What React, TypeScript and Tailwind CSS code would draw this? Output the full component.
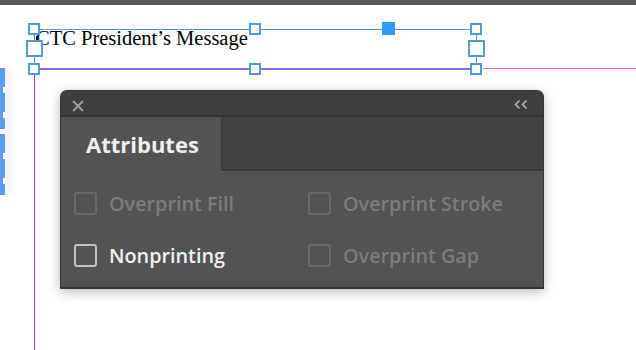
import React from "react";

// Text frame handles, placed on the layout canvas
const handles = [
  { l: 28, t: 23, s: 12 },
  { l: 249, t: 23, s: 12 },
  { l: 470, t: 23, s: 12 },
  { l: 26, t: 40, s: 17 },
  { l: 468, t: 40, s: 17 },
  { l: 28, t: 63, s: 12 },
  { l: 249, t: 63, s: 12 },
  { l: 470, t: 63, s: 12 },
];

function Checkbox({ label, enabled }: { label: string; enabled?: boolean }) {
  return (
    <div className="flex items-center gap-[12px] h-[23px]">
      <div
        className={
          enabled
            ? "w-[23px] h-[23px] rounded-[3px] border-2 border-[#c4c4c4]"
            : "w-[23px] h-[23px] rounded-[3px] border-2 border-[#6a6a6a]"
        }
      />
      <span
        className={
          enabled
            ? "text-[19.8px] font-semibold text-[#f2f2f2] leading-none"
            : "text-[19.8px] font-semibold text-[#7d7d7d] leading-none"
        }
      >
        {label}
      </span>
    </div>
  );
}

function AttributesPanel() {
  return (
    <div
      className="absolute left-[60px] top-[85px] w-[484px] h-[199px] flex flex-col rounded-t-[7px] overflow-hidden border border-[#363636] border-b-2 bg-[#535353] shadow-[0_3px_12px_rgba(0,0,0,0.28)]"
      style={{ fontFamily: '"Open Sans", "Noto Sans", sans-serif' }}
    >
      <div className="h-[26px] shrink-0 flex items-center justify-between pl-[11px] pr-[15px] pt-[6px] bg-[#3e3e3e] border-b-2 border-[#333333]">
        <svg width="12" height="12" viewBox="0 0 12 12">
          <path d="M1 1L11 11M11 1L1 11" stroke="#a0a0a0" strokeWidth="1.8" />
        </svg>
        <svg width="14" height="9" viewBox="0 0 14 9" className="-mt-[3px]">
          <path d="M5.5 0.5L1.5 4.5L5.5 8.5M12.5 0.5L8.5 4.5L12.5 8.5" stroke="#c4c4c4" strokeWidth="1.3" fill="none" />
        </svg>
      </div>
      <div className="h-[54px] shrink-0 flex bg-[#424242]">
        <div className="w-[161px] flex items-center pl-[25px] pb-[1px] bg-[#535353] border-r border-[#383838]">
          <span className="text-[22px] font-bold text-[#f0f0f0] leading-none">Attributes</span>
        </div>
        <div className="flex-1 border-b-2 border-[#383838]" />
      </div>
      <div className="flex-1 grid grid-cols-[234px_1fr] content-start gap-y-[29px] pt-[21px] pl-[13px]">
        <Checkbox label="Overprint Fill" />
        <Checkbox label="Overprint Stroke" />
        <Checkbox label="Nonprinting" enabled />
        <Checkbox label="Overprint Gap" />
      </div>
    </div>
  );
}

export default function App() {
  return (
    <div className="w-[636px] h-[350px] overflow-hidden bg-white flex flex-col">
      <div className="h-[5px] shrink-0 bg-[#595959]" />
      <div className="relative flex-1">
        {/* selection edge of a neighbouring object */}
        <div className="absolute left-0 top-[63px] w-[5px] h-[127px] flex flex-col gap-[5px] shadow-[4px_0_8px_rgba(0,0,0,0.1)]">
          <div className="flex-1 flex">
            <div className="w-[3px] bg-[#5a9cf0]" />
            <div className="w-[2px] bg-[repeating-linear-gradient(to_bottom,#5a9cf0_0_19px,#ffffff_19px_25px)]" />
          </div>
          <div className="flex-1 flex">
            <div className="w-[3px] bg-[#5a9cf0]" />
            <div className="w-[2px] bg-[repeating-linear-gradient(to_bottom,#5a9cf0_0_19px,#ffffff_19px_25px)]" />
          </div>
        </div>

        {/* column guide */}
        <div className="absolute left-[34px] top-[64px] w-[1px] h-[290px] bg-[#a03ed2]" />
        <div className="absolute left-[34px] top-[63px] w-[442px] h-[2px] bg-[#8b68ec]" />
        <div className="absolute left-[483px] top-[63px] w-[160px] h-[1px] bg-[#d86ae0]" />

        {/* text frame */}
        <div className="absolute left-[34px] top-[24px] w-[442px] h-[1px] bg-[#4a9ad6]" />
        <div className="absolute left-[34px] top-[30px] w-[1px] h-[28px] bg-[#4a9ad6]" />
        <div className="absolute left-[476px] top-[30px] w-[1px] h-[28px] bg-[#4a9ad6]" />
        <div
          className="absolute left-[36px] top-[23px] text-[20.5px] leading-none text-black whitespace-nowrap"
          style={{ fontFamily: '"Liberation Serif", serif' }}
        >
          CTC President’s Message
        </div>
        <div className="absolute left-[36px] top-[31px] w-[2px] h-[9px] bg-black" />
        {handles.map((h, i) => (
          <div
            key={i}
            className="absolute bg-white border-2 border-[#4d9cd8]"
            style={{ left: h.l, top: h.t - 5, width: h.s, height: h.s }}
          />
        ))}
        <div className="absolute left-[382px] top-[17px] w-[13px] h-[13px] bg-[#3399ff]" />

        <AttributesPanel />
      </div>
    </div>
  );
}
